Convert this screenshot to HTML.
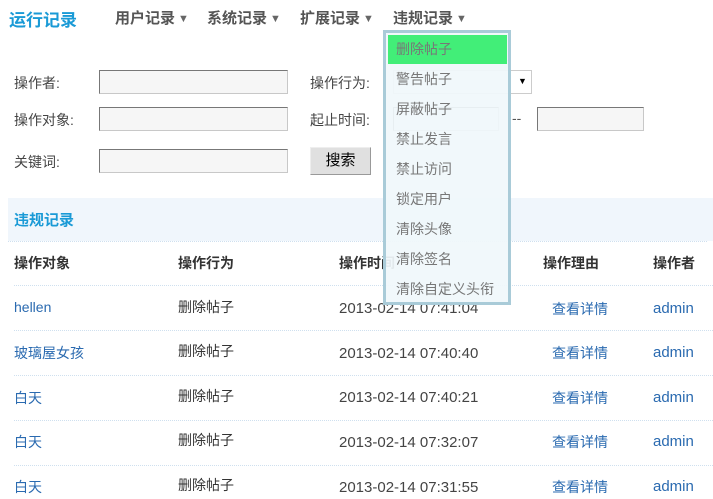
<!DOCTYPE html>
<html><head><meta charset="utf-8"><style>
body{margin:0;width:713px;height:499px;overflow:hidden;background:#fff;font-family:"Liberation Sans","Noto Sans CJK SC",sans-serif;font-size:14px;color:#333;position:relative}
.a{position:absolute;white-space:nowrap}
.nav{top:7px;font-size:15px;font-weight:bold;color:#555}
.nav span{font-size:11px;margin-left:3px;color:#666;position:relative;top:-1px}
.lbl{color:#444}
.inp{position:absolute;height:24px;border:1px solid #c8c8c8;border-top-color:#777;border-left-color:#777;background:#f6f6f6;box-sizing:border-box}
.th{font-weight:bold;color:#333;top:253px}
.ln{position:absolute;left:14px;width:699px;border-top:1px dotted #cfe0ef;height:0}
.lk{color:#2a6ab0}
.dt{font-size:15px;color:#444}
.dd{position:absolute;left:383px;top:30px;width:128px;height:275px;box-sizing:border-box;border:3px solid #a9cbd8;background:rgba(240,247,251,0.93)}
.it{position:absolute;left:10px;color:#777;font-size:14px}
</style></head><body>
<div class="a" style="left:9px;top:6px;font-size:17px;font-weight:bold;color:#1a9ad6">运行记录</div>
<div class="a nav" style="left:115px">用户记录<span>▼</span></div>
<div class="a nav" style="left:207px">系统记录<span>▼</span></div>
<div class="a nav" style="left:300px">扩展记录<span>▼</span></div>
<div class="a nav" style="left:393px">违规记录<span>▼</span></div>

<div class="a lbl" style="left:14px;top:73px">操作者:</div>
<div class="a lbl" style="left:14px;top:110px">操作对象:</div>
<div class="a lbl" style="left:14px;top:152px">关键词:</div>
<div class="inp" style="left:99px;top:70px;width:189px"></div>
<div class="inp" style="left:99px;top:107px;width:189px"></div>
<div class="inp" style="left:99px;top:149px;width:189px"></div>
<div class="a lbl" style="left:310px;top:73px">操作行为:</div>
<div class="a lbl" style="left:310px;top:110px">起止时间:</div>
<div class="inp" style="left:393px;top:70px;width:139px;background:#fff;border-color:#ccc"></div>
<div class="a" style="left:518px;top:76px;font-size:9px;color:#000">▼</div>
<div class="inp" style="left:393px;top:107px;width:106px"></div>
<div class="a" style="left:512px;top:110px;color:#555">--</div>
<div class="inp" style="left:537px;top:107px;width:107px"></div>
<div style="position:absolute;left:310px;top:147px;width:61px;height:28px;box-sizing:border-box;background:#e0e0e0;border:1px solid #999;border-top-color:#eee;border-left-color:#eee;text-align:center;line-height:26px;font-size:15px;color:#000">搜索</div>

<div style="position:absolute;left:8px;top:198px;width:705px;height:43px;background:#f0f6fc"></div>
<div class="a" style="left:14px;top:209px;font-size:15px;font-weight:bold;color:#1a9ad6">违规记录</div>
<div class="ln" style="left:8px;top:241px"></div>
<div class="a th" style="left:14px">操作对象</div>
<div class="a th" style="left:178px">操作行为</div>
<div class="a th" style="left:339px">操作时间</div>
<div class="a th" style="left:543px">操作理由</div>
<div class="a th" style="left:653px">操作者</div>
<div class="ln" style="top:285px"></div>
<div class="ln" style="top:330px"></div>
<div class="ln" style="top:375px"></div>
<div class="ln" style="top:420px"></div>
<div class="ln" style="top:465px"></div>

<div class="a lk" style="left:14px;top:299px">hellen</div>
<div class="a lk" style="left:14px;top:343px">玻璃屋女孩</div>
<div class="a lk" style="left:14px;top:388px">白天</div>
<div class="a lk" style="left:14px;top:432px">白天</div>
<div class="a lk" style="left:14px;top:477px">白天</div>
<div class="a" style="left:178px;top:297px">删除帖子</div>
<div class="a" style="left:178px;top:341px">删除帖子</div>
<div class="a" style="left:178px;top:386px">删除帖子</div>
<div class="a" style="left:178px;top:430px">删除帖子</div>
<div class="a" style="left:178px;top:475px">删除帖子</div>
<div class="a dt" style="left:339px;top:300px">2013-02-14 07:41:04</div>
<div class="a dt" style="left:339px;top:345px">2013-02-14 07:40:40</div>
<div class="a dt" style="left:339px;top:389px">2013-02-14 07:40:21</div>
<div class="a dt" style="left:339px;top:434px">2013-02-14 07:32:07</div>
<div class="a dt" style="left:339px;top:479px">2013-02-14 07:31:55</div>
<div class="a lk" style="left:552px;top:299px">查看详情</div>
<div class="a lk" style="left:552px;top:343px">查看详情</div>
<div class="a lk" style="left:552px;top:388px">查看详情</div>
<div class="a lk" style="left:552px;top:432px">查看详情</div>
<div class="a lk" style="left:552px;top:477px">查看详情</div>
<div class="a lk" style="left:653px;top:300px;font-size:15px">admin</div>
<div class="a lk" style="left:653px;top:344px;font-size:15px">admin</div>
<div class="a lk" style="left:653px;top:389px;font-size:15px">admin</div>
<div class="a lk" style="left:653px;top:433px;font-size:15px">admin</div>
<div class="a lk" style="left:653px;top:478px;font-size:15px">admin</div>

<div class="dd">
<div style="position:absolute;left:2px;top:2px;width:119px;height:29px;background:#42ee78"></div>
<div class="it" style="top:6px">删除帖子</div>
<div class="it" style="top:36px">警告帖子</div>
<div class="it" style="top:66px">屏蔽帖子</div>
<div class="it" style="top:96px">禁止发言</div>
<div class="it" style="top:126px">禁止访问</div>
<div class="it" style="top:156px">锁定用户</div>
<div class="it" style="top:186px">清除头像</div>
<div class="it" style="top:216px">清除签名</div>
<div class="it" style="top:246px">清除自定义头衔</div>
</div>
</body></html>
